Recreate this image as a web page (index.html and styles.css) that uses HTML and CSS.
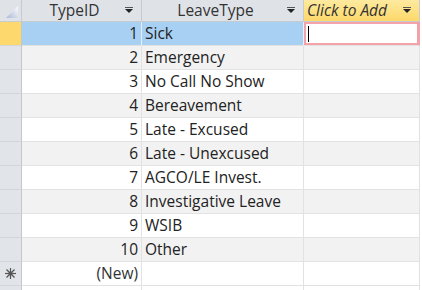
FILE: index.html
```html
<!DOCTYPE html>
<html lang="en">
<head>
  <meta charset="UTF-8">
  <title>LeaveTypes</title>
  <link rel="stylesheet" href="styles.css">
</head>
<body>
  <div class="sheet">
    <div class="row head">
      <div class="cell sel corner">
        <svg width="12" height="12" viewBox="0 0 12 12"><defs><linearGradient id="g" x1="0" y1="1" x2="1" y2="0"><stop offset="0" stop-color="#a9b8d6"/><stop offset="1" stop-color="#ffffff"/></linearGradient></defs><polygon points="0,12 12,0 12,12" fill="url(#g)"/></svg>
      </div>
      <div class="cell id">TypeID<span class="arrow"></span></div>
      <div class="cell name">LeaveType<span class="arrow"></span></div>
      <div class="cell add">Click to Add<span class="arrow"></span></div>
    </div>

    <div class="row current">
      <div class="cell sel"></div>
      <div class="cell id">1</div>
      <div class="cell name">Sick</div>
      <div class="cell add"><span class="caret"></span></div>
    </div>
    <div class="row alt">
      <div class="cell sel"></div><div class="cell id">2</div><div class="cell name">Emergency</div><div class="cell add"></div>
    </div>
    <div class="row">
      <div class="cell sel"></div><div class="cell id">3</div><div class="cell name">No Call No Show</div><div class="cell add"></div>
    </div>
    <div class="row alt">
      <div class="cell sel"></div><div class="cell id">4</div><div class="cell name">Bereavement</div><div class="cell add"></div>
    </div>
    <div class="row">
      <div class="cell sel"></div><div class="cell id">5</div><div class="cell name">Late - Excused</div><div class="cell add"></div>
    </div>
    <div class="row alt">
      <div class="cell sel"></div><div class="cell id">6</div><div class="cell name">Late - Unexcused</div><div class="cell add"></div>
    </div>
    <div class="row">
      <div class="cell sel"></div><div class="cell id">7</div><div class="cell name">AGCO/LE Invest.</div><div class="cell add"></div>
    </div>
    <div class="row alt">
      <div class="cell sel"></div><div class="cell id">8</div><div class="cell name">Investigative Leave</div><div class="cell add"></div>
    </div>
    <div class="row">
      <div class="cell sel"></div><div class="cell id">9</div><div class="cell name">WSIB</div><div class="cell add"></div>
    </div>
    <div class="row alt">
      <div class="cell sel"></div><div class="cell id">10</div><div class="cell name">Other</div><div class="cell add"></div>
    </div>
    <div class="row newrow">
      <div class="cell sel">
        <svg width="11" height="11" viewBox="0 0 11 11"><g stroke="#555" stroke-width="1.2"><line x1="5.5" y1="0" x2="5.5" y2="11"/><line x1="0" y1="5.5" x2="11" y2="5.5"/><line x1="1.5" y1="1.5" x2="9.5" y2="9.5"/><line x1="9.5" y1="1.5" x2="1.5" y2="9.5"/></g><circle cx="5.5" cy="5.5" r="2" fill="#555"/></svg>
      </div>
      <div class="cell id">(New)</div>
      <div class="cell name"></div>
      <div class="cell add"></div>
    </div>
    <div class="row tail">
      <div class="cell sel"></div><div class="cell id"></div><div class="cell name"></div><div class="cell add"></div>
    </div>
  </div>
</body>
</html>
```

FILE: styles.css
```css
body {
  margin: 0;
  background: #fff;
  font-family: "Open Sans", "Noto Sans", sans-serif;
  font-size: 15.5px;
  color: #222;
  overflow: hidden;
}

.sheet {
  width: 420px;
  height: 290px;
  overflow: hidden;
}

.row {
  display: flex;
  height: 24px;
}

.cell {
  box-sizing: border-box;
  height: 24px;
  border-right: 1px solid #e2e2e2;
  border-bottom: 1px solid #e2e2e2;
  line-height: 23px;
  white-space: nowrap;
  overflow: hidden;
}

.sel { width: 22px; background: #e1e4e8; border-right-color: #c3c7cc; border-bottom-color: #d2d5d9; }
.id { width: 120px; text-align: right; padding-right: 3px; }
.name { width: 162px; padding-left: 3px; }
.add { width: 116px; position: relative; }

.row.alt .id, .row.alt .name, .row.alt .add { background: #f2f2f2; }

.head .cell {
  height: 22px;
  line-height: 21px;
  background: #dfe3e8;
  color: #333;
  border-right-color: #c7cbd0;
  border-bottom-color: #c7cbd0;
  position: relative;
}
.head { height: 22px; }
.head .id, .head .name { text-align: center; padding: 0 14px 0 0; }
.head .add {
  background: linear-gradient(#fdeaa0, #fdd86a);
  font-style: italic;
  padding-left: 3px;
  color: #333;
}
.head .corner { display: flex; align-items: flex-end; justify-content: flex-end; padding: 0 3px 3px 0; }

.arrow {
  position: absolute;
  right: 8px;
  top: 9px;
  width: 0;
  height: 0;
  border-left: 4px solid transparent;
  border-right: 4px solid transparent;
  border-top: 4px solid #222;
}
.arrow::before {
  content: "";
  position: absolute;
  left: -4px;
  top: -6px;
  width: 8px;
  height: 1px;
  background: #555;
}

.current .sel { background: #fdd86d; }
.current .id, .current .name { background: #a8d0f3; border-right-color: #e8eef5; }
.current .add { box-shadow: inset 0 0 0 2px #f2a2a8; border-right-color: #f2a2a8; }

.caret {
  position: absolute;
  left: 4px;
  top: 4px;
  width: 1px;
  height: 16px;
  background: #000;
}

.newrow .sel { display: flex; align-items: center; justify-content: center; }
.newrow .id { color: #333; }

.tail .cell { border-bottom: none; }
```
